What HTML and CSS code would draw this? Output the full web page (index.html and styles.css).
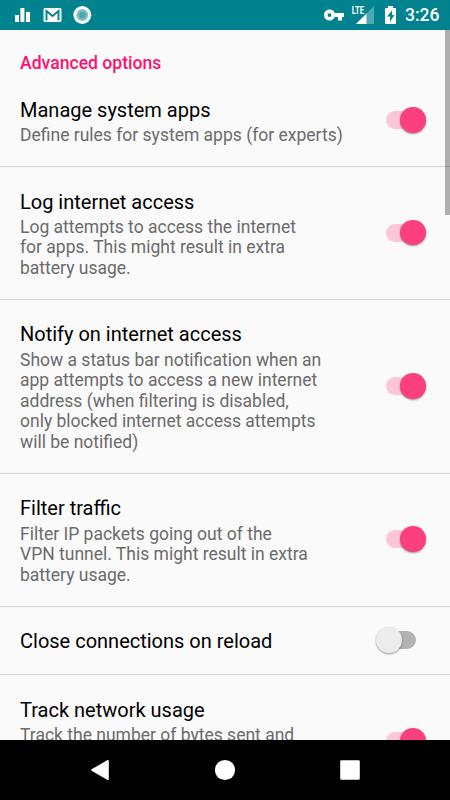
FILE: index.html
```html
<!DOCTYPE html>
<html lang="en">
<head>
<meta charset="utf-8">
<title>Advanced options</title>
<link rel="stylesheet" href="styles.css">
</head>
<body>
<div class="screen">
  <header class="status">
    <svg width="100" height="30" viewBox="0 0 100 30" fill="#fff">
      <path d="M15 15h4v7h-4zM20.400 8h4v14h-4zM26 12h4v10h-4z"/>
      <rect x="43.500" y="8" width="18" height="14" rx="1.500"/>
      <path d="M46.500 20.500V11l6 5 6-5v9.500" fill="none" stroke="#00838f" stroke-width="1.900"/>
      <circle cx="82.300" cy="15" r="9"/>
      <circle cx="82.300" cy="15" r="5.900" fill="#80c1c7"/>
      <circle cx="82.300" cy="15" r="3.500" fill="#4da8b0"/>
    </svg>
    <div class="status-right">
      <svg width="85" height="30" viewBox="320 0 85 30" fill="#fff">
        <path fill-rule="evenodd" d="M334.800 13A5.600 5.600 0 1 0 334.800 17H338v3.500h4V17h2v-4zM329.500 13.200a1.900 1.900 0 1 1 0 3.800 1.900 1.900 0 0 1 0-3.800z"/>
        <path d="M374 6v18h-18z" opacity=".3"/>
        <path d="M366.500 13.500V24H356z"/>
        <text class="lte" x="351.700" y="14" textLength="12.300" lengthAdjust="spacingAndGlyphs">LTE</text>
        <path fill-rule="evenodd" d="M388 6h5v2h2q1 0 1 1v14q0 1-1 1h-9q-1 0-1-1V9q0-1 1-1h2zM392 10.500l-5 6h3v5l4.500-6.500h-2.500z"/>
      </svg>
      <span class="time">3:26</span>
    </div>
  </header>
  <main class="content">
    <h1 class="category">Advanced options</h1>
    <section class="row first">
      <div class="text"><div class="title">Manage system apps</div><div class="summary">Define rules for system apps (for experts)</div></div>
      <div class="switch on"></div>
    </section>
    <section class="row">
      <div class="text"><div class="title">Log internet access</div><div class="summary">Log attempts to access the internet<br>for apps. This might result in extra<br>battery usage.</div></div>
      <div class="switch on"></div>
    </section>
    <section class="row">
      <div class="text"><div class="title">Notify on internet access</div><div class="summary">Show a status bar notification when an<br>app attempts to access a new internet<br>address (when filtering is disabled,<br>only blocked internet access attempts<br>will be notified)</div></div>
      <div class="switch on"></div>
    </section>
    <section class="row">
      <div class="text"><div class="title">Filter traffic</div><div class="summary">Filter IP packets going out of the<br>VPN tunnel. This might result in extra<br>battery usage.</div></div>
      <div class="switch on"></div>
    </section>
    <section class="row single">
      <div class="text"><div class="title">Close connections on reload</div></div>
      <div class="switch"></div>
    </section>
    <section class="row last">
      <div class="text"><div class="title">Track network usage</div><div class="summary">Track the number of bytes sent and</div></div>
      <div class="switch on"></div>
    </section>
    <div class="scrollbar"></div>
  </main>
  <nav class="nav">
    <svg width="450" height="60" viewBox="0 0 450 60" fill="#fff">
      <path d="M108 20.800v18.400L92 30z" stroke="#fff" stroke-width="1.600" stroke-linejoin="round"/>
      <circle cx="225" cy="30" r="10.100"/>
      <rect x="340.200" y="20.200" width="19.600" height="19.600" rx="1.200"/>
    </svg>
  </nav>
</div>
</body>
</html>
```

FILE: styles.css
```css
* { box-sizing: border-box; }
body { margin: 0; font-family: Roboto, sans-serif; }
.screen {
  width: 450px;
  height: 800px;
  overflow: hidden;
  display: flex;
  flex-direction: column;
  background: #fafafa;
}
.status {
  flex: 0 0 30px;
  display: flex;
  justify-content: space-between;
  background: #00838f;
}
.status svg, .nav svg { display: block; }
.time {
  width: 45px;
  padding-top: 1px;
  color: #fff;
  font-size: 17.5px;
  font-weight: 500;
  line-height: 29px;
  white-space: nowrap;
}
.status-right { display: flex; }
.lte { font-size: 10.500px; font-weight: 700; }
.content {
  position: relative;
  flex: 1 1 0;
  min-height: 0;
  overflow: hidden;
}
.category {
  margin: 0;
  padding: 21px 20px 0;
  height: 45px;
  color: #ff1070;
  font-size: 17.600px;
  font-weight: 500;
  line-height: 24px;
}
.row {
  display: flex;
  align-items: center;
  justify-content: space-between;
  padding: 22.600px 24px 20.600px 20px;
  border-bottom: 1px solid #d5d5d5;
}
.first { height: 92px; }
.single { height: 68.600px; }
.last { height: 133px; }
.last .text { align-self: flex-start; }
.title {
  color: #000;
  font-size: 20px;
  line-height: 24px;
  white-space: nowrap;
}
.summary {
  margin-top: 3.200px;
  color: #6b6b6b;
  font-size: 17.500px;
  line-height: 20.500px;
  white-space: nowrap;
}
.switch {
  position: relative;
  flex: 0 0 50px;
  height: 26px;
  margin: -3.200px 0 -0.800px;
}
.switch::before {
  content: "";
  position: absolute;
  left: 10px;
  top: 4px;
  width: 30px;
  height: 18px;
  border-radius: 9px;
  background: #b3b3b3;
}
.switch::after {
  content: "";
  position: absolute;
  left: 0;
  top: 0;
  width: 25.500px;
  height: 25.500px;
  border-radius: 50%;
  background: #ececec;
  box-shadow: 0 1px 2px rgba(0, 0, 0, .4);
}
.switch.on::before { background: #fdc6d8; }
.switch.on::after { left: 24.300px; background: #fc407f; }
.scrollbar {
  position: absolute;
  top: 0;
  right: 0;
  width: 5px;
  height: 185px;
  background: rgba(0, 0, 0, .3);
}
.nav { flex: 0 0 60px; background: #000; }
```
